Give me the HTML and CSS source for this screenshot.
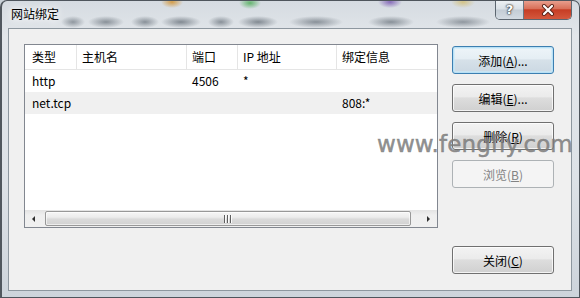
FILE: index.html
```html
<!DOCTYPE html>
<html lang="zh-CN">
<head>
    <meta charset="UTF-8">
    <meta name="viewport" content="width=device-width, initial-scale=1.0">
    <title>网站绑定</title>
    <link rel="stylesheet" href="styles.css">
</head>
<body>
    <div class="window">
        <div class="titlebar">
            <span class="title">网站绑定</span>
            <div class="caption-buttons">
                <span class="cap-btn help">?</span>
                <span class="cap-btn close">
                    <svg width="14" height="12" viewBox="0 0 14 12">
                        <path d="M3 2 L11 10 M11 2 L3 10" stroke="#5a2418" stroke-width="4" stroke-linecap="round"/>
                        <path d="M3 2 L11 10 M11 2 L3 10" stroke="#fff" stroke-width="2.2" stroke-linecap="round"/>
                    </svg>
                </span>
            </div>
        </div>

        <div class="client">
            <div class="listview">
                <div class="lv-header">
                    <div class="cell">类型</div>
                    <div class="cell">主机名</div>
                    <div class="cell">端口</div>
                    <div class="cell">IP 地址</div>
                    <div class="cell">绑定信息</div>
                </div>
                <div class="lv-row">
                    <div class="cell">http</div>
                    <div class="cell"></div>
                    <div class="cell">4506</div>
                    <div class="cell">*</div>
                    <div class="cell"></div>
                </div>
                <div class="lv-row selected">
                    <div class="cell">net.tcp</div>
                    <div class="cell"></div>
                    <div class="cell"></div>
                    <div class="cell"></div>
                    <div class="cell">808:*</div>
                </div>

                <!-- 水平滚动条 -->
                <div class="hscroll">
                    <div class="sb-arrow"><span class="tri-left"></span></div>
                    <div class="sb-track"><div class="sb-thumb"></div></div>
                    <div class="sb-arrow"><span class="tri-right"></span></div>
                </div>
            </div>

            <div class="buttons">
                <button class="btn default">添加(<u>A</u>)...</button>
                <button class="btn">编辑(<u>E</u>)...</button>
                <button class="btn">删除(<u>R</u>)</button>
                <button class="btn" disabled>浏览(<u>B</u>)</button>
                <button class="btn close-btn">关闭(<u>C</u>)</button>
            </div>
        </div>

        <div class="watermark">www.fengfly.com</div>
    </div>
</body>
</html>
```

FILE: styles.css
```css
body {
    margin: 0;
    font-family: "Noto Sans CJK SC", sans-serif;
    font-size: 12px;
    color: #000;
    background-color: #c9d1d8;
}

.window {
    position: relative;
    width: 580px;
    height: 298px;
    box-sizing: border-box;
    display: flex;
    flex-direction: column;
    padding: 0 7px 6px 6px;
    border: 1px solid #4e555c;
    border-left: 2px solid #50575e;
    border-radius: 7px 7px 0 0;
    background: linear-gradient(180deg, #d5dbe1 0%, #e2e6ea 12%, #dde2e7 60%, #cdd4db 100%);
    overflow: hidden;
}

/* 标题栏 (玻璃效果) */
.titlebar {
    height: 27px;
    display: flex;
    justify-content: space-between;
    align-items: flex-start;
    background:
        radial-gradient(ellipse 11px 6px at 164px 1px, rgba(210, 145, 45, 0.85), transparent),
        radial-gradient(ellipse 11px 6px at 242px 2px, rgba(70, 170, 80, 0.8), transparent),
        radial-gradient(ellipse 12px 6px at 382px 1px, rgba(115, 80, 175, 0.8), transparent),
        radial-gradient(ellipse 12px 6px at 455px 1px, rgba(210, 185, 95, 0.7), transparent),
        radial-gradient(ellipse 12px 6px at 65px 21px, rgba(80, 90, 100, 0.55), transparent),
        radial-gradient(ellipse 18px 6px at 98px 21px, rgba(80, 90, 100, 0.6), transparent),
        radial-gradient(ellipse 14px 6px at 137px 21px, rgba(80, 90, 100, 0.6), transparent),
        radial-gradient(ellipse 20px 6px at 173px 21px, rgba(80, 90, 100, 0.65), transparent),
        radial-gradient(ellipse 13px 6px at 213px 21px, rgba(80, 90, 100, 0.6), transparent),
        radial-gradient(ellipse 20px 6px at 250px 21px, rgba(80, 90, 100, 0.65), transparent),
        radial-gradient(ellipse 27px 6px at 308px 21px, rgba(80, 90, 100, 0.6), transparent),
        radial-gradient(ellipse 23px 6px at 383px 21px, rgba(80, 90, 100, 0.6), transparent),
        radial-gradient(ellipse 27px 6px at 455px 21px, rgba(80, 90, 100, 0.55), transparent);
}

.title {
    margin: 5px 0 0 3px;
    line-height: 16px;
    font-size: 12px;
    text-shadow: 0 0 6px #fff, 0 0 10px rgba(255, 255, 255, 0.9);
}

.caption-buttons {
    display: flex;
    margin-top: -1px;
    border: 1px solid #5c6670;
    border-top: none;
    border-radius: 0 0 5px 5px;
    overflow: hidden;
}

.cap-btn {
    height: 19px;
    display: flex;
    align-items: center;
    justify-content: center;
}

.help {
    width: 27px;
    border-right: 1px solid #6c7680;
    background: linear-gradient(180deg, #eef2f5 0%, #d9e0e6 48%, #c3ccd5 52%, #d3dbe2 100%);
    color: #fff;
    font-family: "DejaVu Sans", sans-serif;
    font-weight: bold;
    font-size: 13px;
    text-shadow: 0 0 1px #333, 0 0 2px #333, 0 0 2px #555;
}

.close {
    width: 47px;
    background: linear-gradient(180deg, #eaa493 0%, #d9715a 45%, #c63d24 52%, #d4583d 100%);
}

/* 客户区 */
.client {
    flex: 1;
    display: flex;
    align-items: flex-start;
    padding: 15px 0 0 15px;
    border: 1px solid #8d979f;
    background-color: #f0f0f0;
}

.listview {
    width: 414px;
    height: 184px;
    box-sizing: border-box;
    display: flex;
    flex-direction: column;
    border: 1px solid #828790;
    background-color: #fff;
}

.lv-header, .lv-row {
    display: grid;
    grid-template-columns: 52px 110px 51px 99px 1fr;
}

.lv-header {
    height: 25px;
    box-sizing: border-box;
    border-bottom: 1px solid #e5e5e5;
}

.lv-header .cell {
    border-right: 1px solid #e5e5e5;
    padding-top: 4px;
    line-height: 16px;
}

.lv-header .cell:last-child {
    border-right: none;
}

.cell {
    padding-left: 5px;
    white-space: nowrap;
}

.cell:first-child {
    padding-left: 7px;
}

.lv-row {
    height: 22px;
    line-height: 21px;
}

.lv-row.selected {
    background-color: #f0f0f0;
}

.hscroll {
    margin-top: auto;
    height: 17px;
    display: flex;
    background: linear-gradient(180deg, #e3e3e3 0%, #efefef 30%, #f0f0f0 100%);
}

.sb-arrow {
    width: 17px;
    display: flex;
    align-items: center;
    justify-content: center;
}

.tri-left {
    border-right: 3px solid #2e2e2e;
    border-top: 3.5px solid transparent;
    border-bottom: 3.5px solid transparent;
}

.tri-right {
    border-left: 3px solid #2e2e2e;
    border-top: 3.5px solid transparent;
    border-bottom: 3.5px solid transparent;
}

.sb-track {
    flex: 1;
    display: flex;
    padding: 1px 9px 1px 3px;
}

.sb-thumb {
    flex: 1;
    position: relative;
    border: 1px solid #989898;
    border-radius: 2px;
    background: linear-gradient(180deg, #f6f6f6 0%, #ececec 40%, #dadada 55%, #d2d2d2 100%);
    box-shadow: inset 0 0 0 1px rgba(255, 255, 255, 0.6);
}

.sb-thumb::after {
    content: "";
    position: absolute;
    left: 50%;
    top: 3px;
    width: 8px;
    height: 8px;
    margin-left: -4px;
    background: repeating-linear-gradient(90deg, #5e5e5e 0 1px, #fbfbfb 1px 2px, transparent 2px 3px);
}

/* 右侧按钮 */
.buttons {
    height: 228px;
    margin: 2px 0 0 14px;
    display: flex;
    flex-direction: column;
    gap: 10px;
}

.btn {
    width: 102px;
    height: 28px;
    padding: 0;
    border: 1px solid #707070;
    border-radius: 3px;
    background: linear-gradient(180deg, #f3f3f3 0%, #ebebeb 45%, #dddddd 50%, #d0d0d0 100%);
    box-shadow: inset 0 0 0 1px rgba(255, 255, 255, 0.75);
    font-family: "Noto Sans CJK SC", sans-serif;
    font-size: 12px;
    color: #000;
}

.btn.default {
    border-color: #3c7fb1;
    background: linear-gradient(180deg, #eef5f9 0%, #e5eef4 45%, #d6e1e9 50%, #cbd8e2 100%);
    box-shadow: inset 0 0 0 1px #b9e0f5, inset 0 0 0 2px rgba(200, 235, 250, 0.6);
}

.btn:disabled {
    border-color: #adb2b5;
    background: #f4f4f4;
    box-shadow: none;
    color: #838383;
}

.close-btn {
    margin-top: auto;
}

.watermark {
    position: absolute;
    left: 375px;
    top: 132px;
    font-family: "DejaVu Sans", sans-serif;
    font-size: 23px;
    line-height: 23px;
    letter-spacing: 0.1px;
    -webkit-text-stroke: 0.5px rgba(125, 125, 125, 0.85);
    color: rgba(125, 125, 125, 0.85);
    white-space: nowrap;
}
```
